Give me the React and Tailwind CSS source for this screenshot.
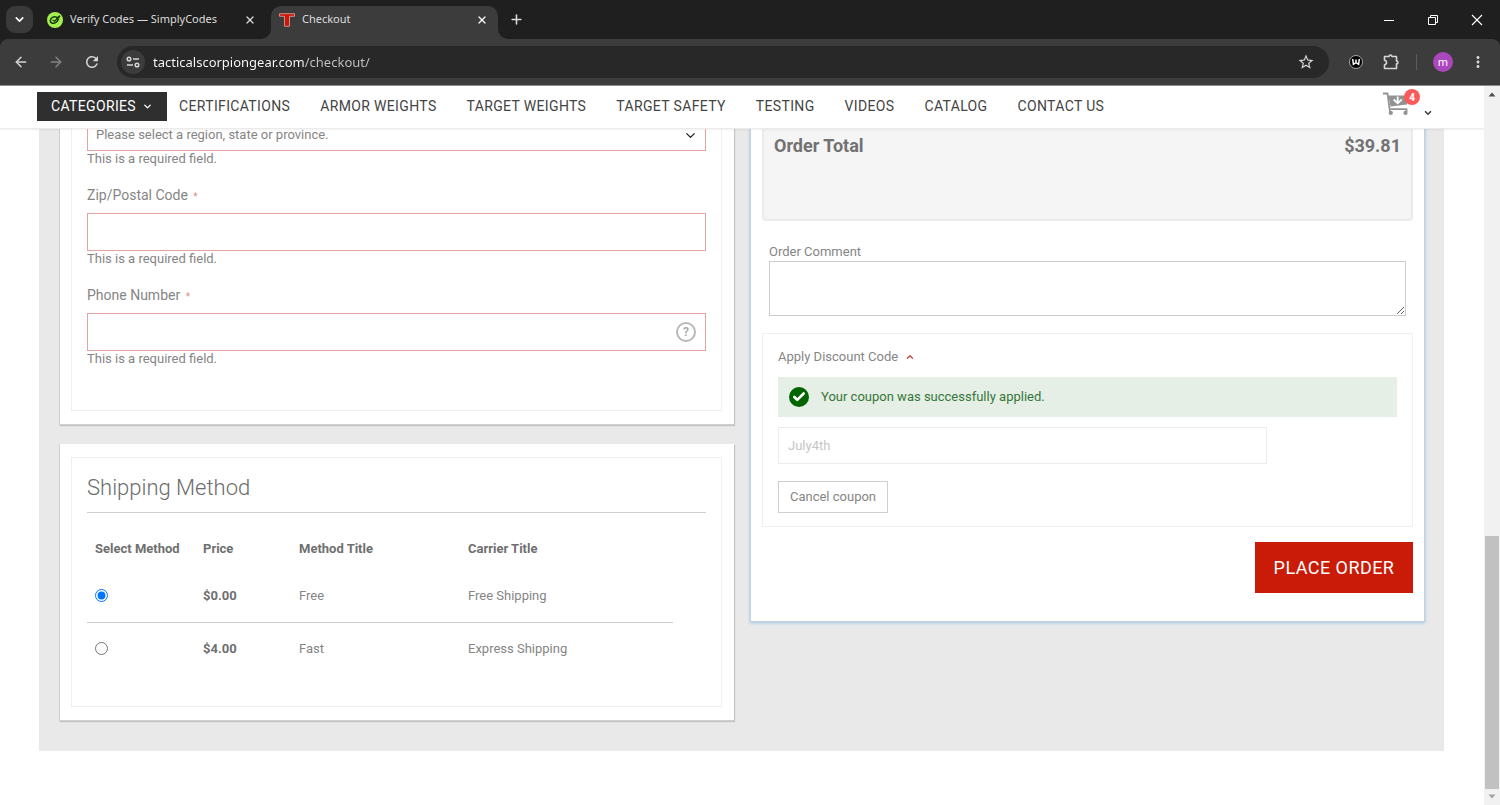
import React from "react";
import { Check, ChevronDown, ChevronUp, ArrowLeft, ArrowRight, X, Plus } from "lucide-react";
import { MdRefresh, MdStarBorder, MdMoreVert } from "react-icons/md";

const NAV = [
  "CERTIFICATIONS",
  "ARMOR WEIGHTS",
  "TARGET WEIGHTS",
  "TARGET SAFETY",
  "TESTING",
  "VIDEOS",
  "CATALOG",
  "CONTACT US",
];

const METHODS = [
  { id: "free", price: "$0.00", title: "Free", carrier: "Free Shipping" },
  { id: "fast", price: "$4.00", title: "Fast", carrier: "Express Shipping" },
];

function TabStrip() {
  return (
    <div className="flex h-[39px] shrink-0 items-center bg-[#1f1f1f] text-[11px] text-[#dcdcdc]">
      <button aria-label="Search tabs" className="ml-1.5 grid size-[27px] place-items-center rounded-[9px] bg-[#3a3a3a] text-white">
        <ChevronDown size={13} strokeWidth={3} />
      </button>
      <div className="flex w-[238px] items-center pl-[14px] pr-[13px]">
        <svg viewBox="0 0 16 16" className="mr-[7px] size-4 shrink-0">
          <circle cx="8" cy="8" r="8" fill="#a4f04f" />
          <g fill="none" stroke="#173a12" strokeLinecap="round">
            <path d="M9.500 5.100C6.600 4 3.600 6 3.300 8.500c-.2 2.500 2.600 3.400 4.700 2.400 1.700-.8 3-2 3.600-3.800" strokeWidth="1.500" />
            <path d="M6 8.200l1.500 1 5.200-4.700M9.500 6.200l3-2.200" strokeWidth="1.300" />
          </g>
        </svg>
        <span className="flex-1 whitespace-nowrap">Verify Codes — SimplyCodes</span>
        <button aria-label="Close tab Verify Codes" className="grid size-4 place-items-center"><X size={12} strokeWidth={2.5} /></button>
      </div>
      <div className="relative mt-1.5 flex h-[33px] w-[227px] items-center rounded-t-[10px] bg-[#3c3c3c] px-2 pb-1.5">
        <svg viewBox="0 0 10 10" className="absolute -left-[10px] bottom-0 size-[10px]" fill="#3c3c3c"><path d="M10 0v10H0A10 10 0 0 0 10 0z" /></svg>
        <svg viewBox="0 0 10 10" className="absolute -right-[10px] bottom-0 size-[10px]" fill="#3c3c3c"><path d="M0 0v10h10A10 10 0 0 1 0 0z" /></svg>
        <svg viewBox="0 0 16 14" className="mr-[7px] h-[14px] w-4 shrink-0">
          <path d="M.5.7h15v2.600h-5v10h-5v-10h-5z" fill="#c9170a" stroke="#e9a59d" strokeWidth=".8" />
        </svg>
        <span className="flex-1">Checkout</span>
        <button aria-label="Close tab Checkout" className="grid size-4 place-items-center text-white"><X size={12} strokeWidth={2.5} /></button>
      </div>
      <button aria-label="New tab" className="ml-2 grid size-5 place-items-center"><Plus size={15} strokeWidth={2.5} /></button>
      <div className="ml-auto flex items-center gap-[30px] pr-4 text-white">
        <button aria-label="Minimize" className="grid size-[14px] place-items-center">
          <svg viewBox="0 0 12 12" className="size-3"><path d="M1 6.500h10" stroke="currentColor" /></svg>
        </button>
        <button aria-label="Restore" className="grid size-[14px] place-items-center">
          <svg viewBox="0 0 12 12" className="size-3" fill="none" stroke="currentColor"><path d="M1.500 3.500h7v7h-7zM3.500 3V1.500h7v7H9" /></svg>
        </button>
        <button aria-label="Close" className="grid size-[14px] place-items-center">
          <svg viewBox="0 0 12 12" className="size-3"><path d="M1 1l10 10M11 1L1 11" stroke="currentColor" strokeWidth="1.100" /></svg>
        </button>
      </div>
    </div>
  );
}

function Toolbar() {
  return (
    <div className="shrink-0 bg-[#1f1f1f]">
      <div className="flex h-[46px] items-center rounded-t-lg bg-[#3c3c3c] px-[13px] text-[#d5d5d5]">
        <button aria-label="Back" className="mr-[19px]"><ArrowLeft size={16} strokeWidth={2.2} /></button>
        <button aria-label="Forward" className="mr-[19px] text-[#848484]"><ArrowRight size={16} strokeWidth={2.2} /></button>
        <button aria-label="Reload" className="mr-4"><MdRefresh size={18} /></button>
        <div className="flex h-8 flex-1 items-center rounded-full bg-[#282828] pl-1 pr-[14px]">
          <button aria-label="Site information" className="mr-2 grid size-6 place-items-center rounded-full bg-[#3c3c3c]">
            <svg viewBox="0 0 14 12" className="h-3 w-[14px]" fill="none" stroke="currentColor" strokeWidth="1.500">
              <circle cx="3" cy="3" r="1.800" /><path d="M7 3h6M1 9h6" /><circle cx="11" cy="9" r="1.800" />
            </svg>
          </button>
          <input
            aria-label="Address"
            defaultValue="tacticalscorpiongear.com/checkout/"
            className="h-6 flex-1 bg-linear-to-r from-white from-[151px] to-[#c4c4c4] to-[151px] bg-clip-text text-[13px] text-transparent outline-none"
          />
          <button aria-label="Bookmark this page"><MdStarBorder size={18} /></button>
        </div>
        <button aria-label="W extension" className="ml-5">
          <svg viewBox="0 0 14 14" className="size-[14px]">
            <circle cx="7" cy="7" r="6.500" fill="#000" stroke="#ddd" strokeWidth=".7" />
            <path d="M3.700 4l.7 5.300L7 7.700l2.600 1.600.7-5.300M7 4.500v3" fill="none" stroke="#fff" strokeWidth="1.500" />
          </svg>
        </button>
        <button aria-label="Extensions" className="ml-[19px]">
          <svg viewBox="0 0 18 18" className="size-[18px]" fill="none" stroke="currentColor" strokeWidth="1.600" strokeLinejoin="round">
            <path d="M2.500 3.500h4.600c0-.9.500-1.500 1.400-1.500s1.400.6 1.400 1.500h4.600v4.600c.9 0 1.500.6 1.500 1.400s-.6 1.400-1.500 1.400v4.600h-12v-3.600c1.300-.2 2-1 2-2.300s-.7-2.100-2-2.300z" />
          </svg>
        </button>
        <span className="ml-4 h-4 w-px bg-[#5d5d5d]" />
        <button aria-label="Profile" className="ml-4 grid size-5 place-items-center rounded-full bg-[#ab47bc] text-[11px] text-white">m</button>
        <button aria-label="Menu" className="ml-4"><MdMoreVert size={18} /></button>
      </div>
      <div className="h-px bg-[#8b8b8b]" />
    </div>
  );
}

function SiteHeader() {
  return (
    <header className="relative z-10 flex h-[43px] shrink-0 items-center border-b border-[#ebebeb] bg-white pb-0.5 pl-[37px] pr-[51px] shadow-[0_1px_2px_rgba(0,0,0,0.06)]">
      <button className="mr-3 flex h-[29px] w-[130px] shrink-0 items-center justify-center gap-1.5 bg-[#2f2f2f] text-sm tracking-wide text-white">
        CATEGORIES <ChevronDown size={11} strokeWidth={3} />
      </button>
      <nav className="flex gap-[30px] whitespace-nowrap text-sm tracking-wide text-[#444]">
        {NAV.map((item) => <a key={item} href="#">{item}</a>)}
      </nav>
      <div className="ml-auto flex items-end">
        <a href="#" aria-label="Cart, 4 items" className="relative mr-[13px] block pb-1">
          <svg viewBox="0 0 27 24" className="h-6 w-[27px]" fill="none" stroke="#929292" strokeWidth="1.800">
            <path d="M0 1.500h4.500L7 20" />
            <path d="M5.500 3.500h20l-1.500 9L7.500 14.500z" fill="#929292" stroke="none" />
            <path d="M7.500 17.200h16V20" />
            <circle cx="7.800" cy="20.900" r="2.100" fill="#929292" stroke="none" />
            <circle cx="22.500" cy="20.900" r="2.100" fill="#929292" stroke="none" />
            <path d="M14.700 4.500v6.500M10.700 7.500l4 3.800 4-3.800" stroke="#fff" strokeWidth="1.800" />
          </svg>
          <span className="absolute -right-[10px] -top-[3px] grid size-4 place-items-center rounded-full bg-[#fb5a5a] text-[10px] font-bold text-white">4</span>
        </a>
        <button aria-label="Show cart" className="pb-0.5"><ChevronDown size={10} strokeWidth={4} className="text-[#444]" /></button>
      </div>
    </header>
  );
}

function Field({ id, label, help }) {
  return (
    <div className="pt-[18px]">
      <label htmlFor={id} className="mb-2 block h-5 text-sm leading-5">{label} <span className="ml-0.5 text-[10px] leading-none text-[#e08a8a]">*</span></label>
      <div className="relative">
        <input id={id} className="block h-[38px] w-full border border-[#e5a3a3] px-2 text-sm outline-none" />
        {help && (
          <button aria-label="Phone number help" className="absolute right-2.5 top-[9px] grid size-5 place-items-center rounded-full border-2 border-[#b9b9b9] text-xs font-bold text-[#adadad]">?</button>
        )}
      </div>
      <p className="text-[13px] leading-4">This is a required field.</p>
    </div>
  );
}

function AddressCard() {
  return (
    <section className="border-b border-l border-[#cfcfcf] bg-white pb-[13px] pl-[11px] pr-3 shadow-[1px_1px_1px_rgba(0,0,0,0.16)]">
      <div className="border border-t-0 border-[#efefef] px-[15px] pb-[43px]">
        <div className="relative">
          <select id="region" aria-label="State/Province" className="block h-[38px] w-full appearance-none border border-[#e5a3a3] bg-white px-2 pb-0 pt-1.5 text-[13px] outline-none">
            <option>Please select a region, state or province.</option>
          </select>
          <ChevronDown size={15} className="pointer-events-none absolute right-2 top-[15px] text-[#222]" />
        </div>
        <p className="text-[13px] leading-4">This is a required field.</p>
        <Field id="zip" label="Zip/Postal Code" />
        <Field id="phone" label="Phone Number" help />
      </div>
    </section>
  );
}

function ShippingCard() {
  return (
    <section className="border-b border-l border-[#cfcfcf] bg-white pb-[13px] pl-[11px] pr-3 pt-[13px] shadow-[1px_1px_1px_rgba(0,0,0,0.16)]">
      <div className="border border-[#efefef] px-[15px] pb-8 pt-4">
        <h2 className="border-b border-[#cfcfcf] pb-2.5 text-[22px] font-light leading-7 text-[#6c6c6c]">Shipping Method</h2>
        <table className="mt-[14px] w-[calc(100%-33px)] table-fixed border-collapse text-left text-[13px]">
          <colgroup><col className="w-[108px]" /><col className="w-[96px]" /><col className="w-[169px]" /><col /></colgroup>
          <thead>
            <tr className="h-[43px]">
              {["Select Method", "Price", "Method Title", "Carrier Title"].map((h) => <th key={h} className="whitespace-nowrap pl-2 font-bold text-[#6f6f6f]">{h}</th>)}
            </tr>
          </thead>
          <tbody>
            {METHODS.map((m, i) => (
              <tr key={m.id} className="h-[52px] border-[#cfcfcf] not-last:border-b">
                <td className="pl-2"><input type="radio" name="method" aria-label={m.title} defaultChecked={i === 0} className="block size-[13px] accent-[#0075ff]" /></td>
                <td className="pl-2 font-bold text-[#6f6f6f]">{m.price}</td>
                <td className="pl-2">{m.title}</td>
                <td className="pl-2">{m.carrier}</td>
              </tr>
            ))}
          </tbody>
        </table>
      </div>
    </section>
  );
}

function SummaryCard() {
  return (
    <section className="self-start border border-t-0 border-[#bdd2e3] bg-white px-[11px] pb-[28px] shadow-[0_1px_3px_rgba(120,170,210,0.6)]">
      <div className="flex h-[108px] items-start justify-between rounded-b border-2 border-t-0 border-[#ebebeb] bg-[#f5f5f5] px-[10px] pt-[21px] text-lg font-bold leading-6 text-[#727272]">
        <span>Order Total</span><span>$39.81</span>
      </div>
      <div className="px-[7px] pt-[22px]">
        <label htmlFor="comment" className="block text-[13px] leading-[18px]">Order Comment</label>
        <textarea id="comment" className="block h-[55px] w-full border border-[#cbcbcb] p-2 text-sm outline-none" />
      </div>
      <div className="mt-[17px] border border-[#f0f0f0] px-[15px] pb-[13px] pt-[13px]">
        <button aria-expanded="true" className="flex items-center gap-[7px] text-[13px] leading-5">Apply Discount Code <ChevronUp size={10} strokeWidth={3} className="text-[#c8423a]" /></button>
        <div role="status" className="mt-2.5 flex h-10 items-center bg-[#e5efe5] px-[11px] text-[13px] text-[#35763a]">
          <span className="mr-3 grid size-5 place-items-center rounded-full bg-[#006400] text-white"><Check size={14} strokeWidth={4.5} /></span>
          Your coupon was successfully applied.
        </div>
        <input id="coupon" aria-label="Discount code" placeholder="July4th" className="mt-2.5 block h-[37px] w-[79%] border border-[#ebebeb] px-[9px] text-[13px] outline-none placeholder:text-[#c6c6c6]" />
        <button className="mt-[17px] block h-8 w-[110px] border border-[#cfcfcf] text-[13px]">Cancel coupon</button>
      </div>
      <button className="ml-auto mt-[15px] block h-[51px] w-[158px] bg-[#c91b07] text-lg tracking-wide text-white">PLACE ORDER</button>
    </section>
  );
}

function Scrollbar() {
  return (
    <div aria-hidden="true" className="flex w-4 shrink-0 flex-col items-center bg-[#f1f1f1]">
      <svg viewBox="0 0 16 16" className="size-4 shrink-0"><path d="M4.500 10.500h7L8 6.500z" fill="#505050" /></svg>
      <span className="flex-[434]" />
      <span className="w-[14px] flex-[253] bg-[#c1c1c1]" />
      <svg viewBox="0 0 16 16" className="size-4 shrink-0"><path d="M4.500 5.500h7L8 9.500z" fill="#a3a3a3" /></svg>
    </div>
  );
}

export default function App() {
  return (
    <div className="flex h-screen flex-col overflow-hidden bg-white font-['Noto_Sans',sans-serif]">
      <TabStrip />
      <Toolbar />
      <div className="flex min-h-0 flex-1">
        <div className="flex min-w-0 flex-1 flex-col overflow-hidden font-[Roboto,sans-serif] text-[#858585]">
          <SiteHeader />
          <main className="-mt-4 ml-[39px] mr-10 grid grid-cols-2 gap-4 bg-[#e9e9e9] pb-[30px] pl-5 pr-[19px]">
            <div className="flex flex-col gap-[19px]">
              <AddressCard />
              <ShippingCard />
            </div>
            <SummaryCard />
          </main>
        </div>
        <Scrollbar />
      </div>
    </div>
  );
}
